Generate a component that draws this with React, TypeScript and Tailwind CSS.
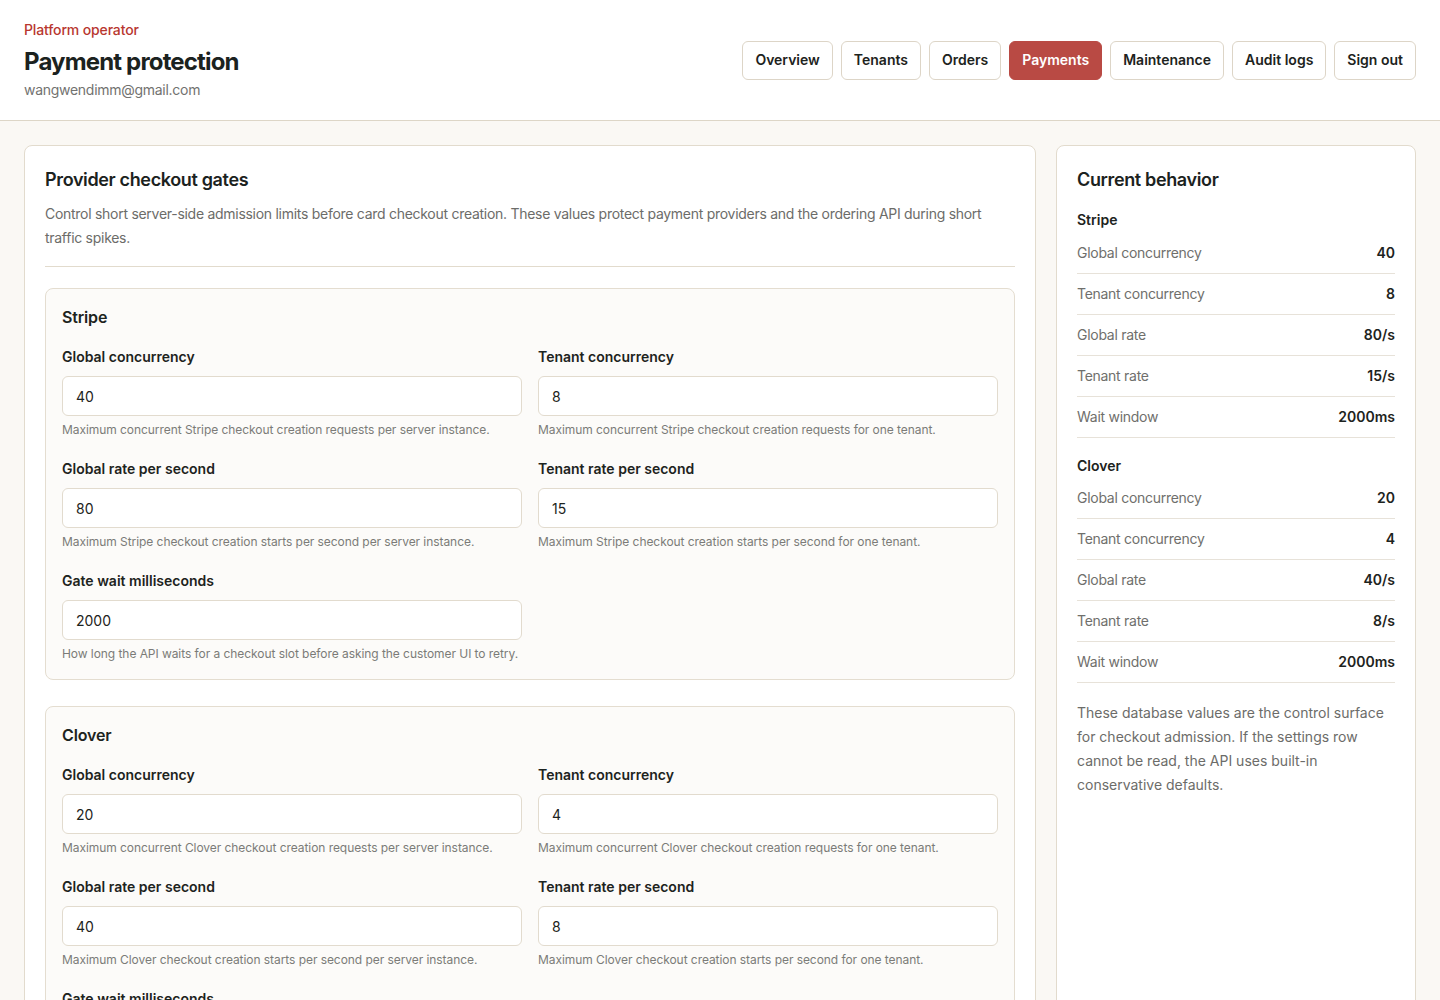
import React from "react";

const navItems = ["Overview", "Tenants", "Orders", "Payments", "Maintenance", "Audit logs", "Sign out"];

type Field = { label: string; value: string; help: string };

function ProviderCard({ name, fields, wait }: { name: string; fields: Field[]; wait: Field }) {
  return (
    <section className="rounded-lg border border-[#e4ddd0] bg-[#fcfbf9] px-4 pt-4 pb-[17px]">
      <h3 className="text-base leading-6 font-semibold tracking-[-0.01em] text-[#1d2320]">{name}</h3>
      <div className="mt-[18px] grid grid-cols-2 gap-x-4 gap-y-[21px]">
        {[...fields, wait].map((f) => (
          <div key={f.label} className="flex flex-col">
            <label className="text-sm leading-5 font-semibold text-[#1d2320]">{f.label}</label>
            <div className="mt-[9px] flex h-10 items-center rounded-md border border-[#e2dbce] bg-white px-[13px] pt-px text-sm text-[#1d2320]">
              {f.value}
            </div>
            <p className="mt-1.5 whitespace-nowrap text-xs leading-4 tracking-[-0.005em] text-[#7b7b78]">{f.help}</p>
          </div>
        ))}
      </div>
    </section>
  );
}

function Row({ label, value }: { label: string; value: string }) {
  return (
    <div className="flex items-center justify-between border-b border-[#e7e2d9] py-2.5">
      <span className="text-sm leading-5 tracking-[-0.02em] text-[#6f6f6c]">{label}</span>
      <span className="text-sm leading-5 font-semibold text-[#1d2320]">{value}</span>
    </div>
  );
}

export default function App() {
  const stripeFields: Field[] = [
    { label: "Global concurrency", value: "40", help: "Maximum concurrent Stripe checkout creation requests per server instance." },
    { label: "Tenant concurrency", value: "8", help: "Maximum concurrent Stripe checkout creation requests for one tenant." },
    { label: "Global rate per second", value: "80", help: "Maximum Stripe checkout creation starts per second per server instance." },
    { label: "Tenant rate per second", value: "15", help: "Maximum Stripe checkout creation starts per second for one tenant." },
  ];
  const cloverFields: Field[] = [
    { label: "Global concurrency", value: "20", help: "Maximum concurrent Clover checkout creation requests per server instance." },
    { label: "Tenant concurrency", value: "4", help: "Maximum concurrent Clover checkout creation requests for one tenant." },
    { label: "Global rate per second", value: "40", help: "Maximum Clover checkout creation starts per second per server instance." },
    { label: "Tenant rate per second", value: "8", help: "Maximum Clover checkout creation starts per second for one tenant." },
  ];
  const waitHelp = "How long the API waits for a checkout slot before asking the customer UI to retry.";

  return (
    <div className="min-h-screen bg-[#faf8f4] text-[#1d2320]" style={{ fontFamily: "Inter, 'Noto Sans', sans-serif" }}>
      <header className="flex items-center justify-between border-b border-[#ddd6c7] bg-white px-6 py-5">
        <div>
          <div className="text-sm leading-5 font-medium tracking-[-0.01em] text-[#b8372f]">Platform operator</div>
          <h1 className="mt-1.5 text-2xl leading-8 font-bold tracking-[-0.035em] text-[#1b2220]">Payment protection</h1>
          <div className="mt-0.5 text-sm leading-5 tracking-[-0.02em] text-[#727270]">wangwendimm@gmail.com</div>
        </div>
        <nav className="flex items-center gap-2">
          {navItems.map((n) => (
            <button
              key={n}
              className={
                n === "Payments"
                  ? "h-[39px] rounded-md border border-[#b94a44] bg-[#b94a44] px-3 text-sm font-semibold text-white"
                  : "h-[39px] rounded-md border border-[#ddd5c7] bg-white px-3 text-sm font-semibold text-[#1d2320]"
              }
            >
              {n}
            </button>
          ))}
        </nav>
      </header>

      <main className="grid grid-cols-[1fr_360px] gap-5 p-6">
        <section className="rounded-lg border border-[#e2dbcd] bg-white p-5">
          <h2 className="text-lg leading-7 font-semibold tracking-[-0.02em] text-[#1b2220]">Provider checkout gates</h2>
          <p className="mt-2 text-sm leading-6 tracking-[-0.02em] text-[#6c6c69]">
            Control short server-side admission limits before card checkout creation. These values protect payment providers and the ordering API during short traffic spikes.
          </p>
          <div className="mt-4 border-t border-[#e2dbcd]" />
          <div className="mt-[21px] flex flex-col gap-[26px]">
            <ProviderCard
              name="Stripe"
              fields={stripeFields}
              wait={{ label: "Gate wait milliseconds", value: "2000", help: waitHelp }}
            />
            <ProviderCard
              name="Clover"
              fields={cloverFields}
              wait={{ label: "Gate wait milliseconds", value: "2000", help: waitHelp }}
            />
          </div>
          <div className="mt-6 flex justify-end">
            <button className="h-10 rounded-md bg-[#b94a44] px-4 text-sm font-semibold text-white">Save settings</button>
          </div>
        </section>

        <aside className="rounded-lg border border-[#e2dbcd] bg-white p-5">
          <h2 className="text-lg leading-7 font-semibold tracking-[-0.02em] text-[#1b2220]">Current behavior</h2>
          <div className="mt-4 text-sm leading-5 font-semibold text-[#1d2320]">Stripe</div>
          <div className="mt-[3px]">
            <Row label="Global concurrency" value="40" />
            <Row label="Tenant concurrency" value="8" />
            <Row label="Global rate" value="80/s" />
            <Row label="Tenant rate" value="15/s" />
            <Row label="Wait window" value="2000ms" />
          </div>
          <div className="mt-[18px] text-sm leading-5 font-semibold text-[#1d2320]">Clover</div>
          <div className="mt-[2px]">
            <Row label="Global concurrency" value="20" />
            <Row label="Tenant concurrency" value="4" />
            <Row label="Global rate" value="40/s" />
            <Row label="Tenant rate" value="8/s" />
            <Row label="Wait window" value="2000ms" />
          </div>
          <p className="mt-[18px] text-sm leading-6 text-[#6c6c69]">
            These database values are the control surface for checkout admission. If the settings row cannot be read, the API uses built-in conservative defaults.
          </p>
        </aside>
      </main>
    </div>
  );
}
